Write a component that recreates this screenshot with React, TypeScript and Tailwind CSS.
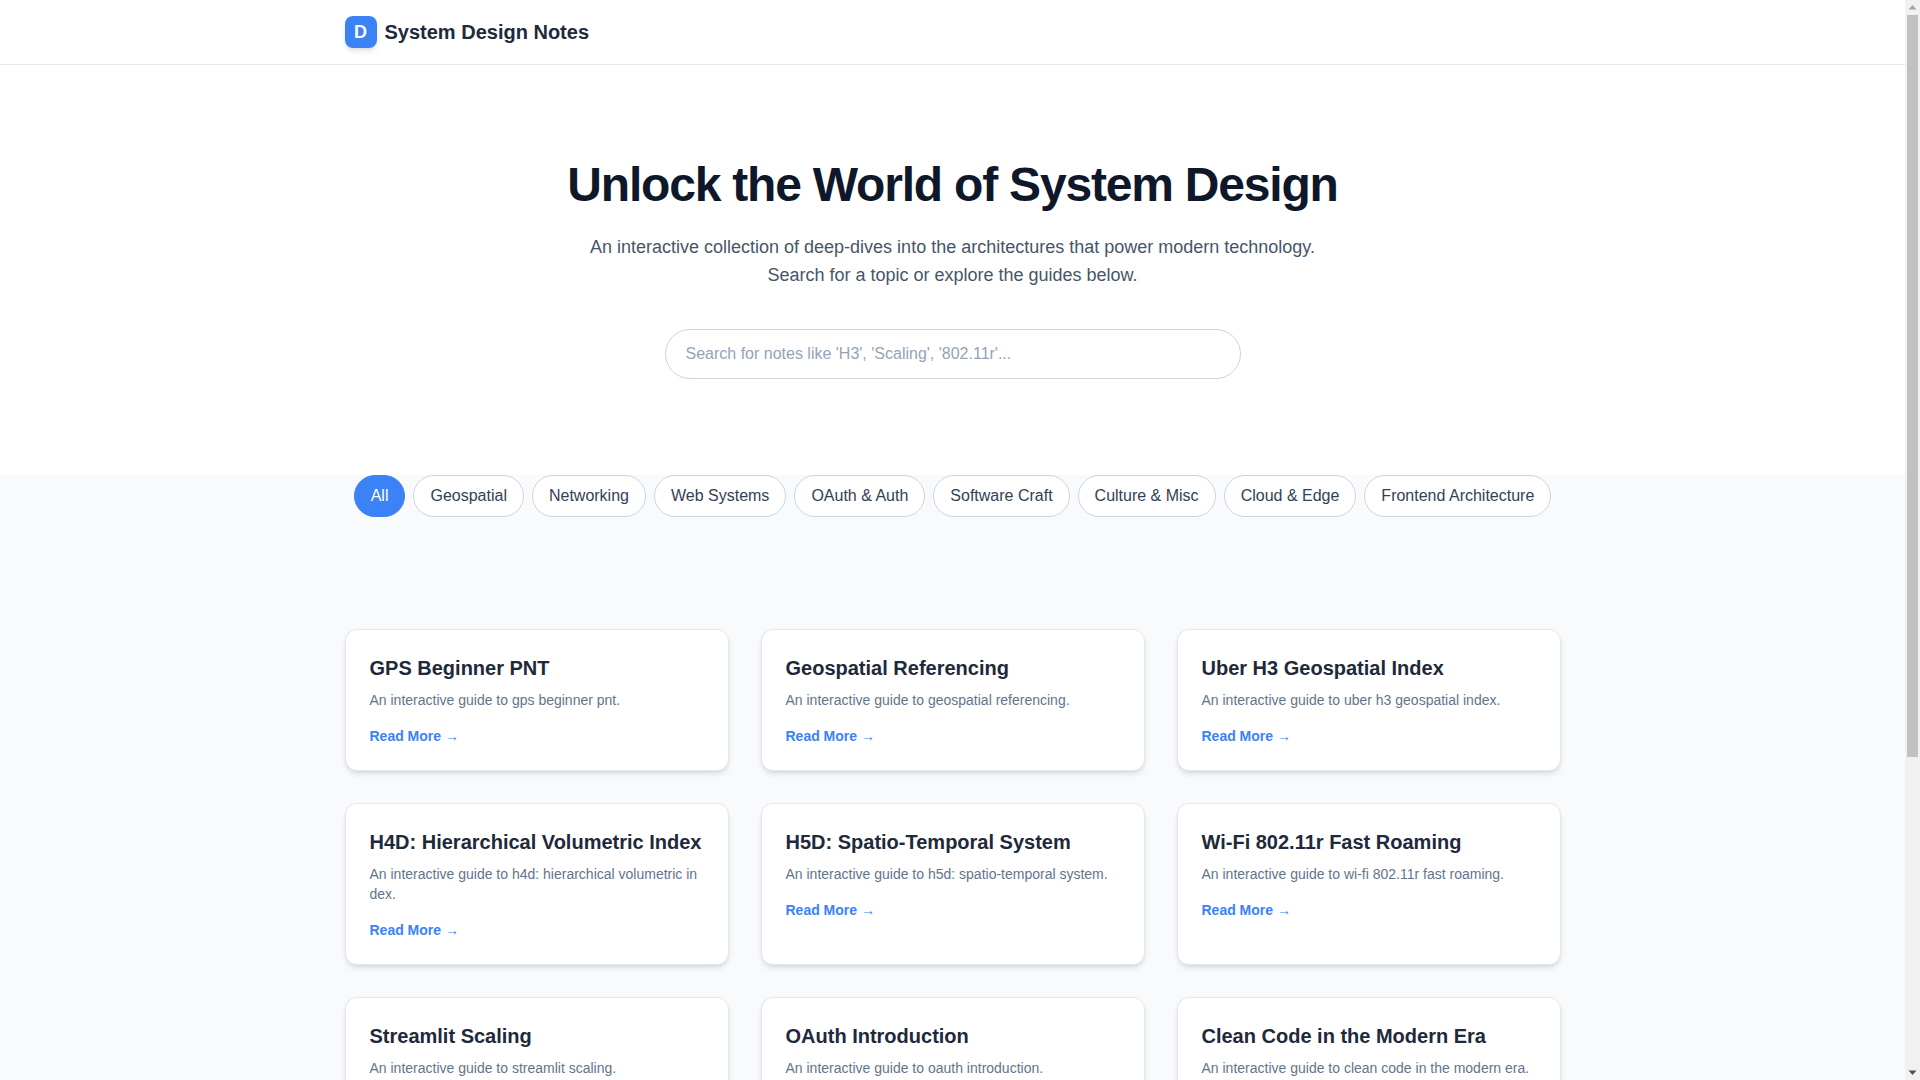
import React from 'react';

const filters = ['All', 'Geospatial', 'Networking', 'Web Systems', 'OAuth & Auth', 'Software Craft', 'Culture & Misc', 'Cloud & Edge', 'Frontend Architecture'];

const notes = [
  { title: 'GPS Beginner PNT', text: 'An interactive guide to gps beginner pnt.' },
  { title: 'Geospatial Referencing', text: 'An interactive guide to geospatial referencing.' },
  { title: 'Uber H3 Geospatial Index', text: 'An interactive guide to uber h3 geospatial index.' },
  { title: 'H4D: Hierarchical Volumetric Index', text: 'An interactive guide to h4d: hierarchical volumetric index.' },
  { title: 'H5D: Spatio-Temporal System', text: 'An interactive guide to h5d: spatio-temporal system.' },
  { title: 'Wi-Fi 802.11r Fast Roaming', text: 'An interactive guide to wi-fi 802.11r fast roaming.' },
  { title: 'Streamlit Scaling', text: 'An interactive guide to streamlit scaling.' },
  { title: 'OAuth Introduction', text: 'An interactive guide to oauth introduction.' },
  { title: 'Clean Code in the Modern Era', text: 'An interactive guide to clean code in the modern era.' },
];

const Scrollbar = () => (
  <div className="w-[15px] shrink-0 h-screen bg-[#f1f1f1] flex flex-col items-center">
    <svg width="15" height="15" viewBox="0 0 15 15" className="shrink-0">
      <path d="M3.5 9.5 L7.5 5 L11.5 9.5 Z" fill="#a3a3a3" />
    </svg>
    <div className="w-[11px] h-[742px] bg-[#c1c1c1] shrink-0" />
    <div className="flex-1" />
    <svg width="15" height="15" viewBox="0 0 15 15" className="shrink-0">
      <path d="M3.5 5.5 L11.5 5.5 L7.5 10 Z" fill="#505050" />
    </svg>
  </div>
);

const App = () => {
  return (
    <div className="h-screen overflow-hidden flex antialiased font-['Liberation_Sans',Arial,sans-serif] text-[#1e293b]">
      <div className="flex-1 min-w-0 h-screen overflow-hidden bg-[#f8fafc]">
        <header className="h-[65px] bg-white border-b border-[#e2e8f0]">
          <div className="max-w-7xl mx-auto px-8 h-full flex items-center gap-2">
            <div className="w-8 h-8 rounded-lg bg-[#3b82f6] shadow-md flex items-center justify-center text-white text-lg font-bold">D</div>
            <span className="text-xl font-bold">System Design Notes</span>
          </div>
        </header>

        <section className="bg-white pt-24 text-center h-[410px]">
          <h1 className="text-5xl font-extrabold tracking-tight text-[#0f172a]">Unlock the World of System Design</h1>
          <p className="mt-6 text-lg text-[#475569] max-w-3xl mx-auto">
            An interactive collection of deep-dives into the architectures that power modern technology.
            <br />
            Search for a topic or explore the guides below.
          </p>
          <input
            type="text"
            placeholder="Search for notes like 'H3', 'Scaling', '802.11r'..."
            className="block mt-10 mx-auto w-full max-w-xl px-5 py-3 text-base bg-white border border-[#cbd5e1] rounded-full placeholder:text-[#94a3b8] outline-none"
          />
        </section>

        <main className="max-w-7xl mx-auto px-8">
          <div className="flex flex-wrap justify-center gap-2 mb-[112px]">
            {filters.map((f, i) => (
              <button
                key={f}
                className={i === 0
                  ? 'px-4 py-2 border border-[#3b82f6] rounded-full bg-[#3b82f6] text-white text-base'
                  : 'px-4 py-2 border border-[#cbd5e1] rounded-full bg-white text-[#334155] text-base'}
              >
                {f}
              </button>
            ))}
          </div>

          <div className="grid grid-cols-3 gap-8">
            {notes.map((n) => (
              <div key={n.title} className="bg-white border border-[#e2e8f0] rounded-xl shadow-md p-6">
                <h3 className="text-xl font-bold text-[#1e293b] mb-2">{n.title}</h3>
                <p className="text-sm text-[#64748b] mb-4 break-all">{n.text}</p>
                <a href="#" className="block text-sm font-semibold text-[#3b82f6]">Read More <span className="font-normal">→</span></a>
              </div>
            ))}
          </div>
        </main>
      </div>
      <Scrollbar />
    </div>
  );
};

export default App;
